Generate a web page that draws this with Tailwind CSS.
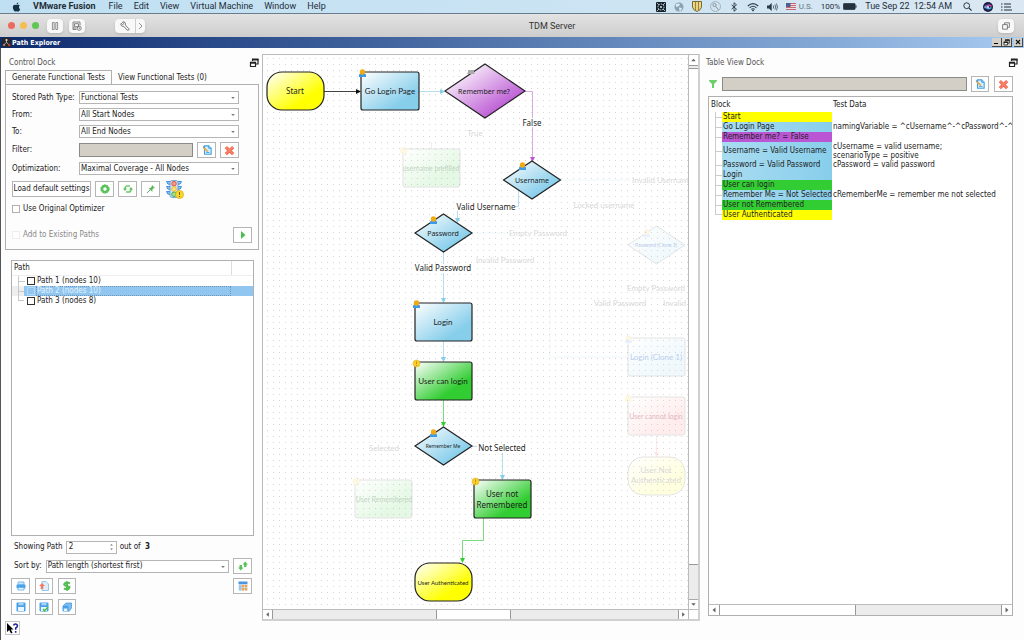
<!DOCTYPE html>
<html lang="en">
<head>
<meta charset="utf-8">
<title>TDM Server - Path Explorer</title>
<script src="https://cdn.jsdelivr.net/npm/@tailwindcss/browser@4"></script>
</head>
<body class="flex h-screen flex-col overflow-hidden bg-[#fdfdfd] font-['DejaVu_Sans_Condensed','Noto_Sans',sans-serif] text-[8px] leading-[10px] text-[#222]">

<svg class="hidden" aria-hidden="true">
  <defs>
    <symbol id="i-edit" viewBox="0 0 12 12">
      <path d="M3 1h5l3 3v7H3z" fill="#d8edfd" stroke="#3fa0e4" stroke-width="1.300"/>
      <path d="M8 1v3h3" fill="#9dd0f5" stroke="#3fa0e4"/>
      <path d="M1.500 2.500l5.500 5.500" stroke="#dcae50" stroke-width="2"/>
      <path d="M1 1.500l2.500 2" stroke="#5b8fc0" stroke-width="1.200"/>
      <path d="M5 9h4" stroke="#3fa0e4"/>
    </symbol>
    <symbol id="i-cross" viewBox="0 0 12 12">
      <path d="M2 2.200l8 7.800M10 2.200L2 10" stroke="#f2664e" stroke-width="3.400" stroke-linecap="butt"/>
      <path d="M2.200 2.200l7.600 7.400M9.800 2.200L2.200 9.600" stroke="#fa8a70" stroke-width="1.200"/>
    </symbol>
    <symbol id="i-float" viewBox="0 0 10 10">
      <path d="M3.500 3V1.500h5.500v4.500H7" fill="none" stroke="#222" stroke-width="1.200"/>
      <path d="M3 1.500h6.500" stroke="#222" stroke-width="2"/>
      <path d="M1.500 4.500h5v4h-5z" fill="#fff" stroke="#222" stroke-width="1.200"/>
      <path d="M1 4.700h6" stroke="#222" stroke-width="2"/>
    </symbol>
    <symbol id="i-down" viewBox="0 0 6 6"><path d="M1.200 2h3.600L3 4z" fill="#777"/></symbol>
    <symbol id="t-left" viewBox="0 0 10 10"><path d="M6.500 2.500v5L3.500 5z" fill="#666"/></symbol>
    <symbol id="t-right" viewBox="0 0 10 10"><path d="M3.500 2.500v5l3-2.500z" fill="#666"/></symbol>
    <symbol id="t-up" viewBox="0 0 10 10"><path d="M2.500 6.500h5L5 3.500z" fill="#666"/></symbol>
    <symbol id="t-down" viewBox="0 0 10 10"><path d="M2.500 3.500h5L5 6.500z" fill="#666"/></symbol>
  </defs>
</svg>

<!-- macOS menu bar -->
<header class="flex h-[14px] shrink-0 items-center justify-between border-b border-[#6a7d8c] bg-gradient-to-r from-[#bfe0f2] via-[#c9e3f3] to-[#dbe8f2] pr-3 pl-3 font-['Roboto',sans-serif] text-[9px] leading-[13px] text-[#1f2d38]">
  <nav class="flex items-center gap-[11px]" aria-label="Menu bar">
    <svg class="mr-px h-[10px] w-[9px]" viewBox="0 0 24 24" fill="#16303f"><path d="M12.152 6.896c-.948 0-2.415-1.078-3.960-1.040-2.040.027-3.910 1.183-4.961 3.014-2.117 3.675-.546 9.103 1.519 12.090 1.013 1.454 2.208 3.090 3.792 3.039 1.520-.065 2.090-.987 3.935-.987 1.831 0 2.350.987 3.960.948 1.637-.026 2.676-1.480 3.676-2.948 1.156-1.688 1.636-3.325 1.662-3.415-.039-.013-3.182-1.221-3.220-4.857-.026-3.040 2.480-4.494 2.597-4.559-1.429-2.090-3.623-2.324-4.390-2.376-2-.156-3.675 1.090-4.610 1.090zM15.530 3.830c.843-1.012 1.400-2.427 1.245-3.830-1.207.052-2.662.805-3.532 1.818-.780.896-1.454 2.338-1.273 3.714 1.338.104 2.715-.688 3.559-1.701"/></svg>
    <button class="mr-[2px] font-bold">VMware Fusion</button>
    <button>File</button>
    <button>Edit</button>
    <button>View</button>
    <button>Virtual Machine</button>
    <button>Window</button>
    <button>Help</button>
  </nav>
  <div class="flex items-center gap-2">
    <svg class="size-[10px]" viewBox="0 0 10 10"><rect width="10" height="10" rx="1" fill="#16202a"/><circle cx="5" cy="5" r="3" fill="none" stroke="#d5e6f2" stroke-width=".9" stroke-dasharray="1.500 .8"/><circle cx="5" cy="5" r="1" fill="#d5e6f2"/><path d="M1 1l2 2M9 1L7 3M1 9l2-2M9 9L7 7" stroke="#d5e6f2" stroke-width=".8"/></svg>
    <svg class="size-[10px]" viewBox="0 0 10 10"><circle cx="5" cy="5" r="4.500" fill="#8aa2b3"/><path d="M2 2l3-.5 1 1.500-2 1.500-2 .5zM5 5.500l3 .5-1 2.500-1.500.5z" fill="#dcebf5"/></svg>
    <svg class="h-[11px] w-[10px]" viewBox="0 0 10 11"><path d="M.5.500h9V6Q9 9 5 10.500 1 9 .5 6z" fill="#f0dc90" stroke="#7c6a2c"/><path d="M3.500 1v8M6.500 1v8" stroke="#9c8634" stroke-width="1.200"/></svg>
    <svg class="size-[11px]" viewBox="0 0 11 11"><circle cx="5.500" cy="5.500" r="5" fill="#d3e2ec" stroke="#93a8b6" stroke-width=".8"/><circle cx="4.500" cy="4" r="1.600" fill="none" stroke="#8499a8"/><path d="M5.500 5l3 4" stroke="#8499a8"/></svg>
    <svg class="h-[10px] w-[10px]" viewBox="0 0 10 10"><path d="M2.500 2.800l5 4.400L5 9.300V.7l2.500 2.100-5 4.400" fill="none" stroke="#2a3a46" stroke-width=".9"/></svg>
    <svg class="h-[10px] w-[12px]" viewBox="0 0 12 10" fill="none" stroke="#2a3a46"><path d="M.8 4Q6-.8 11.200 4M2.600 5.800Q6 2.700 9.400 5.800M4.300 7.400Q6 6 7.700 7.400" stroke-width="1.100"/><circle cx="6" cy="8.600" r=".5" fill="#2a3a46"/></svg>
    <svg class="h-[10px] w-[11px]" viewBox="0 0 11 10" fill="none" stroke="#2a3a46"><path d="M0 3.500h2L4.700 1v8L2 6.500H0z" fill="#2a3a46" stroke="none"/><path d="M6.200 3.500q1 1.500 0 3M7.900 2.500q1.700 2.500 0 5M9.400 1.500q2.200 3.500 0 7" stroke-width=".7"/></svg>
    <span class="flex items-center gap-[3px] text-[8px] text-[#66747f]">
      <svg class="h-[7px] w-[10px]" viewBox="0 0 10 7"><rect width="10" height="7" fill="#eadfe2"/><path d="M0 .5h10M0 2.500h10M0 4.500h10M0 6.500h10" stroke="#c26a72"/><rect width="4.500" height="4" fill="#4d5f91"/></svg>U.S.</span>
    <span class="flex items-center gap-[3px] text-[8px]">100%
      <svg class="h-[7px] w-[14px]" viewBox="0 0 14 7"><rect x=".4" y=".4" width="11.700" height="6.200" rx="1" fill="#22313d" stroke="#22313d" stroke-width=".8"/><path d="M13 2.300v2.400" stroke="#22313d"/></svg></span>
    <span class="flex gap-1"><span>Tue Sep 22</span><span>12:54 AM</span></span>
    <svg class="ml-[3px] size-[9px]" viewBox="0 0 9 9" fill="none" stroke="#2a3a46"><circle cx="3.700" cy="3.700" r="2.900"/><path d="M6 6l2.600 2.600" stroke-width="1.200"/></svg>
    <svg class="ml-[3px] size-[10px]" viewBox="0 0 10 10"><circle cx="5" cy="5" r="5" fill="#1d2148"/><path d="M1.500 6Q5 1 8.500 4.500" stroke="#d04fb0" stroke-width="1.500" fill="none"/><path d="M1.800 4Q5 8.500 8.300 5.500" stroke="#4fb8e6" stroke-width="1.500" fill="none"/><circle cx="5" cy="5" r="1" fill="#fff"/></svg>
    <svg class="h-[8px] w-[11px]" viewBox="0 0 11 8" stroke="#22313d" stroke-width="1.100"><path d="M0 1h1.500M0 4h1.500M0 7h1.500M3 1h7M3 4h7M3 7h8"/></svg>
  </div>
</header>

<!-- Virtual machine window toolbar -->
<div class="grid h-[23px] shrink-0 grid-cols-[1fr_auto_1fr] items-center bg-gradient-to-b from-[#e3e3e3] to-[#cdcdcd] pr-[10px] pl-2">
  <div class="flex items-center">
    <button class="size-[7px] rounded-full bg-[#ec6a5e]" aria-label="Close"></button>
    <button class="ml-[5px] size-[7px] rounded-full bg-[#f4bf4f]" aria-label="Minimize"></button>
    <button class="ml-[5px] size-[7px] rounded-full bg-[#61c554]" aria-label="Zoom"></button>
    <button class="ml-2 flex h-[14px] w-4 items-center justify-center rounded-sm bg-[#f8f8f8] shadow-sm" aria-label="Pause">
      <svg class="size-2" viewBox="0 0 8 8" fill="none" stroke="#777" stroke-width=".8"><path d="M1.400.5h1.800v7H1.400zM4.800.5h1.800v7H4.800z"/></svg></button>
    <button class="ml-[6px] flex h-[14px] w-4 items-center justify-center rounded-sm bg-[#f8f8f8] shadow-sm" aria-label="Snapshots">
      <svg class="size-[10px]" viewBox="0 0 10 10" fill="none" stroke="#666" stroke-width=".8"><path d="M4.500 8.500H1V1h7v3.500M2.500 2.700h4v3h-4zM1 7h3.500"/><circle cx="7.200" cy="7.300" r="2"/><path d="M7.200 6.300v1l.8.4"/></svg></button>
    <div class="ml-[30px] flex h-[14px] rounded-sm bg-[#f8f8f8] shadow-sm">
      <button class="flex w-[21px] items-center justify-center border-r border-[#ccc]" aria-label="Settings">
        <svg class="size-[10px]" viewBox="0 0 10 10" fill="none" stroke="#555" stroke-width=".8"><path d="M1.200 2.300l1.400 1.400 1.200-1.200L2.400 1.100Q4 .4 5 1.500T5.200 4l3.600 3.600q.6.900-.1 1.500t-1.500 0L3.700 5.300Q2.300 5.700 1.400 4.700T1.200 2.300z"/></svg></button>
      <button class="flex w-[9px] items-center justify-center" aria-label="Expand">
        <svg class="h-2 w-[5px]" viewBox="0 0 5 8" fill="none" stroke="#777" stroke-width=".8"><path d="M1 1l3 3-3 3"/></svg></button>
    </div>
  </div>
  <h1 class="pl-[82px] font-['Roboto',sans-serif] text-[9px] text-[#333]">TDM Server</h1>
  <button class="flex h-[14px] w-4 items-center justify-center justify-self-end rounded-sm bg-[#f8f8f8] shadow-sm" aria-label="Full screen">
    <svg class="size-2" viewBox="0 0 8 8" fill="none" stroke="#666" stroke-width=".8"><path d="M.6 2.600h4.800v4.600H.6zM2.600 2.600V.8h4.800v4.500H5.400"/></svg></button>
</div>

<!-- Guest window title bar -->
<div class="flex h-[11px] shrink-0 items-center justify-between bg-gradient-to-r from-[#0e2a6e] to-[#a6caf0] pr-px pl-[2px] text-[7px] text-white">
  <div class="flex items-center gap-px font-bold">
    <svg class="size-[9px]" viewBox="0 0 9 9"><rect width="9" height="9" rx="1" fill="#2b2525"/><path d="M4.500 1.200v3L1.800 7M4.500 4.200L7 7" stroke="#aaa" fill="none"/><circle cx="4.500" cy="2" r="1.100" fill="#ddd"/><circle cx="2" cy="7" r="1.100" fill="#999"/><circle cx="7.200" cy="7" r="1.200" fill="#c0392b"/></svg>
    <span>Path Explorer</span>
  </div>
  <div class="flex">
    <button class="flex h-[9px] w-[10px] items-end border-r border-b border-[#444] bg-[#d4d0c8] p-[2px]" aria-label="Minimize"><span class="block h-px w-1 bg-black"></span></button>
    <button class="flex h-[9px] w-[10px] items-center justify-center border-r border-b border-[#444] bg-[#d4d0c8]" aria-label="Restore"><svg class="size-[7px]" viewBox="0 0 10 10"><use href="#i-float"/></svg></button>
    <button class="ml-[2px] flex h-[9px] w-[9px] items-center justify-center border-r border-b border-[#444] bg-[#d4d0c8]" aria-label="Close"><svg class="size-[6px]" viewBox="0 0 6 6"><path d="M1 1l4 4M5 1L1 5" stroke="#111" stroke-width="1.200"/></svg></button>
  </div>
</div>

<main class="grid min-h-0 flex-1 grid-cols-[261px_minmax(0,1fr)_324px] border-l border-[#555]">

  <!-- Control dock -->
  <section class="flex min-h-0 flex-col pt-2 pr-px pl-1">
    <div class="flex h-[13px] items-center justify-between pr-[2px] pl-1">
      <h2 class="text-[#555]">Control Dock</h2>
      <button aria-label="Float control dock"><svg class="size-[10px]"><use href="#i-float"/></svg></button>
    </div>
    <div class="flex h-[15px] items-end">
      <button class="-mb-px h-[15px] w-[107px] border border-b-0 border-[#b0b0b0] bg-[#fdfdfd] text-center whitespace-nowrap">Generate Functional Tests</button>
      <button class="h-[13px] pl-[6px] whitespace-nowrap">View Functional Tests (0)</button>
    </div>
    <form class="mr-[2px] flex flex-col border border-[#b0b0b0] px-[6px] pt-[6px] pb-[6px]">
      <div class="grid grid-cols-[67px_160px] items-center gap-y-1">
        <label for="ptype" class="whitespace-nowrap">Stored Path Type:</label>
        <div class="relative flex h-[13px]"><select id="ptype" class="w-full appearance-none border border-[#b5b5b5] bg-white px-px"><option>Functional Tests</option></select><svg class="pointer-events-none absolute top-1 right-[3px] size-[6px]"><use href="#i-down"/></svg></div>
        <label for="from">From:</label>
        <div class="relative flex h-[13px]"><select id="from" class="w-full appearance-none border border-[#b5b5b5] bg-white px-px"><option>All Start Nodes</option></select><svg class="pointer-events-none absolute top-1 right-[3px] size-[6px]"><use href="#i-down"/></svg></div>
        <label for="to">To:</label>
        <div class="relative flex h-[13px]"><select id="to" class="w-full appearance-none border border-[#b5b5b5] bg-white px-px"><option>All End Nodes</option></select><svg class="pointer-events-none absolute top-1 right-[3px] size-[6px]"><use href="#i-down"/></svg></div>
        <label for="filter">Filter:</label>
        <div class="flex h-4 items-center gap-1">
          <input id="filter" class="h-[14px] min-w-0 flex-1 border border-[#8a8a86] bg-[#d3cfc7]">
          <button type="button" class="flex h-4 w-[19px] items-center justify-center border border-[#b5b5b5] bg-white" aria-label="Edit filter"><svg class="size-[10px]"><use href="#i-edit"/></svg></button>
          <button type="button" class="flex h-4 w-[19px] items-center justify-center border border-[#b5b5b5] bg-white" aria-label="Clear filter"><svg class="size-[11px]"><use href="#i-cross"/></svg></button>
        </div>
        <label for="opt">Optimization:</label>
        <div class="relative flex h-[13px]"><select id="opt" class="w-full appearance-none border border-[#b5b5b5] bg-white px-px"><option>Maximal Coverage - All Nodes</option></select><svg class="pointer-events-none absolute top-1 right-[3px] size-[6px]"><use href="#i-down"/></svg></div>
      </div>
      <div class="mt-[6px] flex h-4 items-center gap-1">
        <button type="button" class="h-4 w-[79px] border border-[#b5b5b5] bg-white whitespace-nowrap">Load default settings</button>
        <button type="button" class="flex h-4 w-[19px] items-center justify-center border border-[#b5b5b5] bg-white" aria-label="Options"><svg class="size-[10px]" viewBox="0 0 10 10"><circle cx="5" cy="5" r="3" fill="none" stroke="#5cc35c" stroke-width="2.600"/><circle cx="5" cy="5" r="4.300" fill="none" stroke="#5cc35c" stroke-width="1" stroke-dasharray="1.500 1.200"/></svg></button>
        <button type="button" class="flex h-4 w-[19px] items-center justify-center border border-[#b5b5b5] bg-white" aria-label="Refresh"><svg class="size-[10px]" viewBox="0 0 10 10"><path d="M2 5V4.200Q2.200 2 4.500 2H7M8 5v.8Q7.800 8 5.500 8H3" fill="none" stroke="#6fcc6f" stroke-width="1.700"/><path d="M0 4.500h4L2 7zM6 5.500h4L8 3z" fill="#5cc35c"/></svg></button>
        <button type="button" class="flex h-4 w-[19px] items-center justify-center border border-[#b5b5b5] bg-white" aria-label="Pin"><svg class="size-[10px]" viewBox="0 0 10 10"><path d="M6 1l3 3-1.500.3-1.200 1.500.2 2.200L2.500 4.200l2-.1L5.700 2.500z" fill="#5fb55f"/><path d="M1 9l3-3" stroke="#66a866"/></svg></button>
        <button type="button" class="ml-[2px]" aria-label="Coverage status"><svg class="h-[19px] w-[18px]" viewBox="0 0 18 19"><path d="M.5 1.500q.5 3.500 4 3V1.500zM.5 6.500q.5 3.500 4 3v-3zM.5 11.500q.5 3.500 4 3v-3zM15.500 1.500q-.5 3.500-4 3V1.500zM15.500 6.500q-.5 3.500-4 3v-3z" fill="#8cc0f2" stroke="#3e8bd8" stroke-width=".9"/><rect x="4" y=".5" width="8" height="17" rx="2" fill="#cfe3f8" stroke="#5c9ad8" stroke-width=".8"/><circle cx="8" cy="3.700" r="2.300" fill="#f59a88" stroke="#e04a34" stroke-width=".9"/><circle cx="8" cy="9" r="2.300" fill="#ffe68a" stroke="#f0b400" stroke-width=".9"/><circle cx="8" cy="14.300" r="2.300" fill="#9be09b" stroke="#3fae3f" stroke-width=".9"/><circle cx="13.500" cy="14.500" r="4" fill="#f8d62c" stroke="#d6a80e" stroke-width=".7"/><path d="M13.500 12v3M13.500 16v1" stroke="#7c5c00"/></svg></button>
      </div>
      <label class="mt-[6px] flex h-3 items-center gap-[3px]"><input type="checkbox" class="size-2 appearance-none border border-[#b0b0b0] bg-white">Use Original Optimizer</label>
      <div class="mt-[11px] flex h-[17px] items-center justify-between">
        <label class="flex items-center gap-[3px] text-[#888]"><input type="checkbox" disabled class="size-2 appearance-none border border-[#eee] bg-white">Add to Existing Paths</label>
        <button type="button" class="flex h-4 w-[19px] items-center justify-center border border-[#b5b5b5] bg-white" aria-label="Run"><svg class="size-2" viewBox="0 0 8 8"><path d="M2 0l4.500 4L2 8z" fill="#4cbf4c"/></svg></button>
      </div>
    </form>

    <!-- Path list -->
    <div class="mt-[10px] mr-[7px] ml-[6px] min-h-0 flex-1 border border-[#b0b0b0] bg-white">
      <div class="flex h-[15px] items-center border-b border-[#eee] pl-[2px]"><span class="flex-1">Path</span><span class="h-full w-[22px] border-l border-[#ddd]"></span></div>
      <ul>
        <li class="flex h-[10px] items-center"><span class="ml-[6px] flex h-full w-[9px] items-center border-l border-[#c8c8c8]"><span class="h-px w-[6px] bg-[#c8c8c8]"></span></span><label class="flex items-center gap-[2px]"><input type="checkbox" class="size-2 appearance-none border border-[#333] bg-white">Path 1 (nodes 10)</label></li>
        <li class="flex h-[10px] items-center"><span class="flex h-full w-3 items-center bg-[#eee] pl-[6px]"><span class="flex h-full flex-1 items-center border-l border-[#c8c8c8]"><span class="h-px w-full bg-[#c8c8c8]"></span></span></span><label class="flex h-full flex-1 items-center gap-px bg-[#90c6f0] pl-[3px] text-[#e4f3fd]"><input type="checkbox" class="size-2 appearance-none border border-[#b5daf5]"><span class="flex h-full flex-1 items-center border border-dotted border-[#6f93b0]">Path 2 (nodes 10)</span></label><span class="h-full w-[22px] bg-[#90c6f0]"></span></li>
        <li class="flex h-[10px] items-center"><span class="ml-[6px] flex h-full w-[9px] items-start border-[#c8c8c8]"><span class="h-[5px] w-[6px] border-b border-l border-[#c8c8c8]"></span></span><label class="flex items-center gap-[2px]"><input type="checkbox" class="size-2 appearance-none border border-[#333] bg-white">Path 3 (nodes 8)</label></li>
      </ul>
    </div>
    <div class="mt-1 ml-[9px] flex h-[14px] items-center gap-[3px]">
      <label for="cur">Showing Path</label>
      <span class="relative flex h-[13px] w-[51px]"><input id="cur" inputmode="numeric" value="2" class="w-full border border-[#b5b5b5] bg-white px-[2px]"><svg class="absolute top-[2px] right-[3px] h-2 w-[5px]" viewBox="0 0 5 8"><path d="M1 2.500h3L2.500 1zM1 5.500h3L2.500 7z" fill="#777"/></svg></span>
      <span>out of <b class="ml-[2px]">3</b></span>
    </div>
    <div class="mt-1 mr-[9px] ml-[9px] flex h-4 items-center gap-1">
      <label for="sort">Sort by:</label>
      <div class="relative flex h-[13px] flex-1"><select id="sort" class="w-full appearance-none border border-[#b5b5b5] bg-white px-px"><option>Path length (shortest first)</option></select><svg class="pointer-events-none absolute top-1 right-[3px] size-[6px]"><use href="#i-down"/></svg></div>
      <button class="flex h-4 w-[19px] items-center justify-center border border-[#b5b5b5] bg-white" aria-label="Sort direction"><svg class="size-[10px]" viewBox="0 0 10 10"><path d="M7.200.5L10 3.500H8.500V6H6V3.500H4.500zM2.800 9.500L0 6.500h1.500V4H4v2.500h1.500z" fill="#5cc35c"/></svg></button>
    </div>
    <div class="mt-1 mr-[9px] ml-[6px] flex h-4 items-center gap-[5px]">
      <button class="flex h-4 w-[19px] items-center justify-center border border-[#b5b5b5] bg-white" aria-label="Print"><svg class="size-[10px]" viewBox="0 0 10 10"><path d="M2 1h6v3H2z" fill="#cfe6fa" stroke="#5badea" stroke-width=".8"/><rect x=".5" y="3.500" width="9" height="4" rx="1" fill="#4ba3e6"/><path d="M2 6.500h6V9H2z" fill="#e6f3fd" stroke="#5badea" stroke-width=".8"/></svg></button>
      <button class="flex h-4 w-[18px] items-center justify-center border border-[#b5b5b5] bg-white" aria-label="Export"><svg class="size-[10px]" viewBox="0 0 10 10"><path d="M3 .5h4L9.500 3v6.500H3z" fill="#dceefb" stroke="#7fbdeb" stroke-width=".8"/><path d="M3 2l3 3H4.300v3H1.700V5H0z" fill="#ef7a6a"/></svg></button>
      <button class="flex h-4 w-[18px] items-center justify-center border border-[#b5b5b5] bg-white" aria-label="Cost"><svg class="size-[10px]" viewBox="0 0 10 10"><path d="M8 2.500Q5 .8 3 2.200T4 4.800t3.500 1T6.500 8Q4 8.800 2 7.400M5 .2v9.600" fill="none" stroke="#54bd54" stroke-width="2"/></svg></button>
      <button class="ml-auto flex h-4 w-[19px] items-center justify-center border border-[#b5b5b5] bg-white" aria-label="Table"><svg class="size-[10px]" viewBox="0 0 10 10"><rect x=".5" y=".5" width="9" height="2.500" fill="#4b95e0"/><path d="M.5 3h9v6.500h-9z" fill="#cfe2f6"/><path d="M1 3.500h2.300v6H1z" fill="#9cc6ef"/><path d="M3.800 3.700h2.300v2.500H3.800zM6.900 3.700h2.300v2.500H6.900zM3.800 6.900h2.300v2.500H3.800zM6.900 6.900h2.300v2.500H6.900z" fill="#f0a34a"/></svg></button>
    </div>
    <div class="mt-[5px] ml-[6px] flex h-4 items-center gap-[5px]">
      <button class="flex h-4 w-[19px] items-center justify-center border border-[#b5b5b5] bg-white" aria-label="Save"><svg class="size-[10px]" viewBox="0 0 10 10"><rect x=".5" y=".5" width="9" height="9" rx="1" fill="#48a0e6"/><path d="M2.500.8h5v2.500h-5z" fill="#a9d4f6"/><path d="M2 5h6v4H2z" fill="#eaf5fd"/></svg></button>
      <button class="flex h-4 w-[18px] items-center justify-center border border-[#b5b5b5] bg-white" aria-label="Save selected"><svg class="size-[10px]" viewBox="0 0 10 10"><rect x=".5" y=".5" width="9" height="9" rx="1" fill="#48a0e6"/><path d="M2.500.8h5v2.500h-5z" fill="#a9d4f6"/><path d="M2 5h6v4H2z" fill="#eaf5fd"/><path d="M4 7l1.500 2L9 5" stroke="#4cbf4c" stroke-width="1.500" fill="none"/></svg></button>
      <button class="flex h-4 w-[18px] items-center justify-center border border-[#b5b5b5] bg-white" aria-label="Save all"><svg class="size-[10px]" viewBox="0 0 10 10"><path d="M1 4l3-3h5.500v5L7 9.500z" fill="#7dbdf0" stroke="#3f92dc" stroke-width=".7"/><rect x=".5" y="3.800" width="6" height="5.700" rx=".8" fill="#48a0e6"/><path d="M1.800 6.500h3.500v2.500H1.800z" fill="#eaf5fd"/></svg></button>
    </div>
    <div class="mt-[6px] mb-[5px] h-[14px]">
      <button class="flex h-[14px] w-[15px] items-center justify-center border border-[#c5c5c5] bg-white" aria-label="What's this?"><svg class="h-3 w-[13px]" viewBox="0 0 13 12"><path d="M1 1v9l2.200-2L5 11.500l1.500-.8L4.800 7.500H7.500z" fill="#000"/><path d="M7.500 3.500Q8 1.800 9.700 1.900T11.500 4Q11 5.300 9.700 6v1.700M9.700 9v1.700" fill="none" stroke="#1d1d9a" stroke-width="1.500"/></svg></button>
    </div>
  </section>

  <!-- Flow canvas -->
  <section class="mt-[6px] mb-[19px] grid min-h-0 grid-cols-[minmax(0,1fr)_10px] grid-rows-[minmax(0,1fr)_10px] border-2 border-t border-l border-[#d0d0d0] border-t-[#bbb] border-l-[#bbb] bg-white" aria-label="Flow diagram">
    <svg class="h-full w-full overflow-hidden font-['Noto_Sans',sans-serif] text-[8px]" fill="none">
      <defs>
        <linearGradient id="gy" x1="0" y1="0" x2="1" y2="1"><stop offset="0" stop-color="#fff"/><stop offset=".7" stop-color="#ff0"/></linearGradient>
        <linearGradient id="gb" x1="0" y1="0" x2="1" y2="1"><stop offset="0" stop-color="#fff"/><stop offset=".75" stop-color="#87ceeb"/></linearGradient>
        <linearGradient id="gg" x1="0" y1="0" x2="1" y2="1"><stop offset="0" stop-color="#fff"/><stop offset=".7" stop-color="#32cd32"/></linearGradient>
        <linearGradient id="gp" x1="0" y1="0" x2="1" y2="1"><stop offset=".1" stop-color="#fff"/><stop offset=".8" stop-color="#ba55d3"/></linearGradient>
        <linearGradient id="gr" x1="0" y1="0" x2="1" y2="1"><stop offset="0" stop-color="#fff"/><stop offset=".75" stop-color="#ff6a6a"/></linearGradient>
        <pattern id="dots" width="6" height="6" patternUnits="userSpaceOnUse"><rect x="4" y="3" width="1" height="1" fill="#d6d6d6"/></pattern>
        <g id="user"><path d="M0 8V6q0-1.500 1.500-1.500h4Q7 4.500 7 6v2z" fill="#3f9be8"/><circle cx="3.500" cy="3" r="2.700" fill="#f0aa14"/></g>
        <g id="warn"><circle cx="3.500" cy="3.500" r="3.500" fill="#f9cf2c" stroke="#e0a810" stroke-width=".5"/><path d="M3.500 1.500v2.500M3.500 5v1" stroke="#b98a10" stroke-width=".9"/></g>
      </defs>
      <rect width="100%" height="100%" fill="url(#dots)"/>
      <g transform="translate(-263 -55)">
        <!-- blocks outside the selected path -->
        <g opacity=".12" stroke="#222">
          <path d="M431.500 142v7" stroke="#ba55d3"/>
          <rect x="403" y="149" width="57" height="38" rx="2" fill="url(#gg)"/>
          <path d="M656.500 226L685 245l-28.500 19L628 245z" fill="url(#gb)"/>
          <rect x="628" y="338" width="57" height="38" rx="2" fill="url(#gb)"/>
          <rect x="628" y="397" width="57" height="38" rx="2" fill="url(#gr)"/>
          <path d="M656.500 436v21" stroke="#f44"/><path d="M654 452h5l-2.500 5z" fill="#f44" stroke="none"/>
          <rect x="628" y="457" width="57" height="38" rx="15" fill="url(#gy)"/>
          <rect x="355" y="480" width="57" height="38" rx="2" fill="url(#gg)"/>
          <path d="M561 180h70M472 233h36M550 250v107h78M412 541h-12M685 357h5" stroke="#87ceeb"/>
          <g stroke="none"><use href="#warn" x="400" y="147"/><use href="#user" x="643" y="229"/><use href="#user" x="625" y="335"/><use href="#warn" x="625" y="395"/><use href="#warn" x="353" y="478"/></g>
        </g>
        <g fill="#d8d8d8" text-anchor="middle" font-family="Lato, sans-serif">
          <text x="475" y="136">True</text>
          <text x="431" y="171" font-size="7" fill="#c2d4c2">username prefilled</text>
          <text x="632" y="183" text-anchor="start">Invalid Username</text>
          <text x="604" y="208">Locked username</text>
          <text x="538" y="236">Empty Password</text>
          <text x="505" y="263">Invalid Password</text>
          <text x="656" y="247" font-size="5" fill="#bccbe8">Password (Clone 1)</text>
          <text x="656" y="291">Empty Password</text>
          <text x="620" y="306">Valid Password</text>
          <text x="663" y="306" text-anchor="start">Invalid Password</text>
          <text x="656" y="360" fill="#bccdee">Login (Clone 1)</text>
          <text x="656" y="419" font-size="7" fill="#dfb9be">User cannot login</text>
          <text x="656" y="473">User Not</text>
          <text x="656" y="483">Authenticated</text>
          <text x="384" y="451">Selected</text>
          <text x="384" y="502" font-size="7" fill="#c2d4c2">User Remembered</text>
        </g>
        <!-- selected path: connectors -->
        <path d="M324 91.500h32" stroke="#444"/><path d="M356 89v5l5-2.500z" fill="#111"/>
        <path d="M419 91.500h22" stroke="#b5dff1"/><path d="M440 89v5l5-2.500z" fill="#87ceeb"/>
        <path d="M525 91.500h7.500V157" stroke="#dcaae9"/><path d="M530 157h5l-2.500 5z" fill="#ba55d3"/>
        <path d="M518.500 190v16.500h-61V219" stroke="#b5dff1"/><path d="M455 218h5l-2.500 5z" fill="#87ceeb"/>
        <path d="M443.500 252v47M443.500 341v17M472 446.500h30.500V476" stroke="#b5dff1"/>
        <path d="M441 298h5l-2.500 5zM441 357h5l-2.500 5zM500 475h5l-2.500 5z" fill="#87ceeb"/>
        <path d="M443.500 400v23M483.500 518v22.500h-21V559" stroke="#7bdb7b"/>
        <path d="M441 422h5l-2.500 5zM460 558h5l-2.500 5z" fill="#32cd32"/>
        <g fill="#fff"><rect x="521" y="118" width="22" height="9"/><rect x="457" y="202" width="58" height="9"/><rect x="413" y="264" width="60" height="9"/><rect x="477" y="443" width="50" height="10"/></g>
        <!-- selected path: blocks -->
        <g stroke="#222" stroke-width="1.200">
          <rect x="267" y="72" width="57" height="38" rx="15" fill="url(#gy)"/>
          <rect x="361" y="72" width="58" height="38" rx="2" fill="url(#gb)"/>
          <path d="M485 64l40 27-40 27-40-27z" fill="url(#gp)"/>
          <path d="M532 161l28.500 19-28.500 19-28.500-19z" fill="url(#gb)"/>
          <path d="M443.500 214l28.500 19-28.500 19L415 233z" fill="url(#gb)"/>
          <rect x="415" y="303" width="57" height="38" rx="2" fill="url(#gb)"/>
          <rect x="415" y="362" width="57" height="38" rx="2" fill="url(#gg)"/>
          <path d="M443.500 427l28.500 19-28.500 19L415 446z" fill="url(#gb)"/>
          <rect x="474" y="480" width="57" height="38" rx="2" fill="url(#gg)"/>
          <rect x="415" y="563" width="57" height="38" rx="15" fill="url(#gy)"/>
        </g>
        <use href="#user" x="359" y="69"/>
        <path d="M468 72V70h6v2l1 2h-8z" fill="#aaa"/>
        <use href="#user" x="519" y="162"/><use href="#user" x="430" y="216"/><use href="#user" x="413" y="300"/><use href="#user" x="430" y="429"/>
        <use href="#warn" x="413" y="360"/><use href="#warn" x="472" y="478"/>
        <g fill="#1c1c1c" text-anchor="middle">
          <text x="295" y="94">Start</text>
          <text x="390" y="94" font-family="Lato, sans-serif">Go Login Page</text>
          <text x="484" y="94" font-size="7">Remember me?</text>
          <text x="532" y="126">False</text>
          <text x="532" y="183" font-size="7">Username</text>
          <text x="486" y="210">Valid Username</text>
          <text x="443" y="236" font-size="7">Password</text>
          <text x="443" y="271">Valid Password</text>
          <text x="443" y="325" font-family="Lato, sans-serif">Login</text>
          <text x="443" y="384" font-family="Lato, sans-serif">User can login</text>
          <text x="443" y="448" font-size="5">Remember Me</text>
          <text x="502" y="451">Not Selected</text>
          <text x="502" y="497">User not</text>
          <text x="502" y="508">Remembered</text>
          <text x="443" y="585" font-size="6" font-family="Lato, sans-serif">User Authenticated</text>
        </g>
      </g>
    </svg>
    <div class="flex flex-col border-l border-[#bbb] bg-[#ececec]">
      <svg class="h-[10px] w-[9px] bg-white" viewBox="0 0 10 10"><use href="#t-up"/></svg>
      <span class="h-1 border-y border-[#999]"></span>
      <span class="min-h-0 flex-1 border-b border-[#999] bg-white"></span>
      <span class="h-[35px] border-b border-[#aaa]"></span>
      <svg class="h-[9px] w-[9px] bg-white" viewBox="0 0 10 10"><use href="#t-down"/></svg>
    </div>
    <div class="flex border-t border-[#bbb] bg-[#ececec]">
      <svg class="h-[9px] w-[10px] border-r border-[#999] bg-white" viewBox="0 0 10 10"><use href="#t-left"/></svg>
      <span class="w-[163px]"></span>
      <span class="w-[75px] border-x border-[#999] bg-white"></span>
      <span class="flex-1"></span>
      <svg class="h-[9px] w-[10px] border-l border-[#999] bg-white" viewBox="0 0 10 10"><use href="#t-right"/></svg>
    </div>
    <div class="border-t border-l border-[#bbb] bg-white"></div>
  </section>

  <!-- Table view dock -->
  <section class="flex min-h-0 flex-col pt-2 pb-[24px] pl-[6px]">
    <div class="flex h-[13px] items-center justify-between pr-[6px]">
      <h2 class="text-[#555]">Table View Dock</h2>
      <button aria-label="Float table dock"><svg class="size-[10px]"><use href="#i-float"/></svg></button>
    </div>
    <div class="mt-[7px] mr-[11px] ml-[3px] flex h-4 items-center">
      <svg class="size-2" viewBox="0 0 8 8"><path d="M0 0h8v1L5 4v4H3V4L0 1z" fill="#6bd06b"/></svg>
      <input class="ml-[5px] h-[14px] min-w-0 flex-1 border border-[#8a8a86] bg-[#d3cfc7]" aria-label="Filter table">
      <button class="ml-1 flex h-4 w-[18px] items-center justify-center border border-[#b5b5b5] bg-white" aria-label="Edit filter"><svg class="size-[10px]"><use href="#i-edit"/></svg></button>
      <button class="ml-[5px] flex h-4 w-[19px] items-center justify-center border border-[#b5b5b5] bg-white" aria-label="Clear filter"><svg class="size-[11px]"><use href="#i-cross"/></svg></button>
    </div>
    <div class="mt-1 mr-[11px] ml-[2px] flex min-h-0 flex-1 flex-col border border-[#b0b0b0] bg-white">
      <div class="min-h-0 flex-1 overflow-hidden">
        <table class="w-full table-fixed border-collapse text-left whitespace-nowrap">
          <colgroup><col class="w-[13px]"><col class="w-[110px]"><col></colgroup>
          <thead><tr class="h-[15px]"><th colspan="2" class="p-0 pl-[2px] font-normal">Block</th><th class="p-0 pl-px font-normal">Test Data</th></tr></thead>
          <tbody>
            <tr class="h-[10px]"><td class="p-0 pl-[6px]"><div class="flex h-[10px] items-center border-l border-[#ccc]"><span class="h-px w-full bg-[#ccc]"></span></div></td><td class="bg-[#ffff00] p-0 pl-px">Start</td><td class="p-0"></td></tr>
            <tr class="h-[10px]"><td class="p-0 pl-[6px]"><div class="flex h-[10px] items-center border-l border-[#ccc]"><span class="h-px w-full bg-[#ccc]"></span></div></td><td class="bg-gradient-to-r from-[#a9dcf1] to-[#87ceeb] p-0 pl-px">Go Login Page</td><td class="overflow-hidden p-0 pl-px">namingVariable = ^cUsername^-^cPassword^-^cRememberMe^</td></tr>
            <tr class="h-[10px]"><td class="p-0 pl-[6px]"><div class="flex h-[10px] items-center border-l border-[#ccc]"><span class="h-px w-full bg-[#ccc]"></span></div></td><td class="bg-[#ba55d3] p-0 pl-px">Remember me? = False</td><td class="p-0"></td></tr>
            <tr class="h-[18px]"><td class="p-0 pl-[6px]"><div class="flex h-[18px] items-center border-l border-[#ccc]"><span class="h-px w-full bg-[#ccc]"></span></div></td><td class="bg-gradient-to-r from-[#a9dcf1] to-[#87ceeb] p-0 pl-px">Username = Valid Username</td><td class="p-0 pl-px leading-[9px]">cUsername = valid username;<br>scenarioType = positive</td></tr>
            <tr class="h-[10px]"><td class="p-0 pl-[6px]"><div class="flex h-[10px] items-center border-l border-[#ccc]"><span class="h-px w-full bg-[#ccc]"></span></div></td><td class="bg-gradient-to-r from-[#a9dcf1] to-[#87ceeb] p-0 pl-px">Password = Valid Password</td><td class="p-0 pl-px">cPassword = valid password</td></tr>
            <tr class="h-[10px]"><td class="p-0 pl-[6px]"><div class="flex h-[10px] items-center border-l border-[#ccc]"><span class="h-px w-full bg-[#ccc]"></span></div></td><td class="bg-gradient-to-r from-[#a9dcf1] to-[#87ceeb] p-0 pl-px">Login</td><td class="p-0"></td></tr>
            <tr class="h-[10px]"><td class="p-0 pl-[6px]"><div class="flex h-[10px] items-center border-l border-[#ccc]"><span class="h-px w-full bg-[#ccc]"></span></div></td><td class="bg-[#32cd32] p-0 pl-px">User can login</td><td class="p-0"></td></tr>
            <tr class="h-[10px]"><td class="p-0 pl-[6px]"><div class="flex h-[10px] items-center border-l border-[#ccc]"><span class="h-px w-full bg-[#ccc]"></span></div></td><td class="bg-gradient-to-r from-[#a9dcf1] to-[#87ceeb] p-0 pl-px">Remember Me = Not Selected</td><td class="p-0 pl-px">cRememberMe = remember me not selected</td></tr>
            <tr class="h-[10px]"><td class="p-0 pl-[6px]"><div class="flex h-[10px] items-center border-l border-[#ccc]"><span class="h-px w-full bg-[#ccc]"></span></div></td><td class="bg-[#32cd32] p-0 pl-px">User not Remembered</td><td class="p-0"></td></tr>
            <tr class="h-[10px]"><td class="p-0 pl-[6px]"><div class="flex h-[10px] items-start"><span class="h-[5px] w-full border-b border-l border-[#ccc]"></span></div></td><td class="bg-[#ffff00] p-0 pl-px">User Authenticated</td><td class="p-0"></td></tr>
          </tbody>
        </table>
      </div>
      <div class="flex h-[11px] border-t border-[#bbb] bg-[#ececec]">
        <svg class="h-[10px] w-[11px] border-r border-[#999] bg-white" viewBox="0 0 10 10"><use href="#t-left"/></svg>
        <span class="w-[136px] border-r border-[#999] bg-white"></span>
        <span class="flex-1"></span>
        <svg class="h-[10px] w-[11px] border-l border-[#999] bg-white" viewBox="0 0 10 10"><use href="#t-right"/></svg>
      </div>
    </div>
  </section>
</main>
</body>
</html>
